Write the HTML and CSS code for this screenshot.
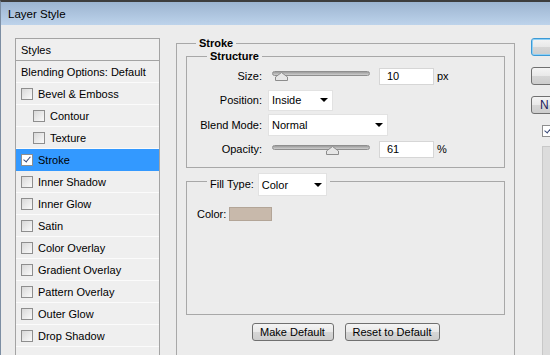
FILE: index.html
```html
<!DOCTYPE html>
<html>
<head>
    <title>Layer Style</title>
    <link rel="stylesheet" href="styles.css">
</head>
<body>
    <div class="window">
        <div class="titlebar">Layer Style</div>
        <div class="content">
            <div class="styles-list">
                <div class="item header">Styles</div>
                <div class="item">Blending Options: Default</div>
                <div class="item"><span class="check"></span>Bevel &amp; Emboss</div>
                <div class="item sub"><span class="check"></span>Contour</div>
                <div class="item sub"><span class="check"></span>Texture</div>
                <div class="item selected"><span class="check checked"></span>Stroke</div>
                <div class="item"><span class="check"></span>Inner Shadow</div>
                <div class="item"><span class="check"></span>Inner Glow</div>
                <div class="item"><span class="check"></span>Satin</div>
                <div class="item"><span class="check"></span>Color Overlay</div>
                <div class="item"><span class="check"></span>Gradient Overlay</div>
                <div class="item"><span class="check"></span>Pattern Overlay</div>
                <div class="item"><span class="check"></span>Outer Glow</div>
                <div class="item"><span class="check"></span>Drop Shadow</div>
                <div class="item"></div>
            </div>

            <fieldset class="group stroke">
                <legend class="title">Stroke</legend>

                <fieldset class="group structure">
                    <legend class="title inner">Structure</legend>
                    <div class="row size-row">
                        <label>Size:</label>
                        <div class="slider">
                            <div class="track"></div>
                            <svg class="thumb" style="left: 7px" width="13" height="9" viewBox="0 0 13 9">
                                <path d="M6.5 0.5 L12.5 5 L12.5 8.5 L0.5 8.5 L0.5 5 Z" fill="#e6e6e6" stroke="#8c8c8c"/>
                            </svg>
                        </div>
                        <div class="field">10</div>
                        <span class="unit">px</span>
                    </div>
                    <div class="row">
                        <label>Position:</label>
                        <div class="select pos-select">Inside<span class="arrow"></span></div>
                    </div>
                    <div class="row blend-row">
                        <label>Blend Mode:</label>
                        <div class="select blend-select">Normal<span class="arrow"></span></div>
                    </div>
                    <div class="row opacity-row">
                        <label>Opacity:</label>
                        <div class="slider">
                            <div class="track"></div>
                            <svg class="thumb" style="left: 58px" width="13" height="9" viewBox="0 0 13 9">
                                <path d="M6.5 0.5 L12.5 5 L12.5 8.5 L0.5 8.5 L0.5 5 Z" fill="#e6e6e6" stroke="#8c8c8c"/>
                            </svg>
                        </div>
                        <div class="field">61</div>
                        <span class="unit">%</span>
                    </div>
                </fieldset>

                <fieldset class="group fill">
                    <legend class="fill-legend">
                        <span class="fill-label">Fill Type:</span>
                        <span class="select fill-select">Color<span class="arrow"></span></span>
                    </legend>
                    <div class="color-row">
                        <span class="color-label">Color:</span>
                        <span class="swatch"></span>
                    </div>
                </fieldset>

                <div class="actions">
                    <button class="btn make-btn">Make Default</button>
                    <button class="btn reset-btn">Reset to Default</button>
                </div>
            </fieldset>

            <div class="side">
                <button class="btn side-btn focused"></button>
                <button class="btn side-btn"></button>
                <button class="btn side-btn new-btn">N</button>
                <div class="preview-row"><span class="check checked small"></span></div>
                <div class="preview"></div>
            </div>
        </div>
    </div>
</body>
</html>
```

FILE: styles.css
```css
body {
    margin: 0;
    width: 550px;
    height: 355px;
    overflow: hidden;
    background-color: #ececec;
    font-family: "Liberation Sans", Arial, sans-serif;
    font-size: 11px;
    color: #000;
}
.window {
    height: 355px;
    box-sizing: border-box;
    border-top: 2px solid #3d3d3d;
    border-left: 1px solid #7c8ea3;
    overflow: hidden;
}
.titlebar {
    height: 23px;
    line-height: 24px;
    padding-left: 7px;
    font-size: 11.5px;
    background: linear-gradient(#9cb4d0, #bdd3eb);
}
.content {
    display: flex;
    align-items: flex-start;
    padding-left: 14px;
}

/* styles list */
.styles-list {
    margin-top: 13px;
    width: 143px;
    height: 330px;
    flex-shrink: 0;
    border: 1px solid #a3a3a3;
    background-color: #efefef;
}
.item {
    height: 21px;
    display: flex;
    align-items: center;
    padding-left: 5px;
    border-bottom: 1px solid #fbfbfb;
    white-space: nowrap;
}
.item.header {
    border-bottom-color: #a3a3a3;
}
.item.sub {
    padding-left: 17px;
}
.item.selected {
    background-color: #3399ff;
    border-bottom-color: #3399ff;
}
.check {
    width: 10px;
    height: 10px;
    margin-right: 5px;
    border: 1px solid #8e8e8e;
    background: linear-gradient(135deg, #d8d8d8, #fafafa);
    flex-shrink: 0;
    position: relative;
}
.check.checked {
    background: #fff;
}
.check.checked::after {
    content: "";
    position: absolute;
    left: 3px;
    top: 0px;
    width: 3px;
    height: 6px;
    border: solid #3a4a78;
    border-width: 0 1.5px 1.5px 0;
    transform: rotate(40deg);
}

/* group boxes */
.group {
    margin: 0;
    border: 1px solid #a8a8a8;
    min-inline-size: 0;
}
.title {
    font-weight: bold;
    line-height: 13px;
    padding: 0 3px;
}
.stroke {
    margin-top: 12px;
    margin-left: 16px;
    width: 339px;
    height: 340px;
    box-sizing: border-box;
    padding: 0 9px;
    flex-shrink: 0;
}
.stroke > .title {
    margin-left: 10px;
}
.structure {
    padding: 1px 0 7px 0;
}
.title.inner {
    margin-left: 20px;
}
.row {
    display: flex;
    align-items: center;
    height: 24px;
}
.blend-row {
    height: 26px;
}
.opacity-row {
    height: 22px;
}
.row label {
    width: 75px;
    margin-right: 6px;
    text-align: right;
}
.slider {
    position: relative;
    width: 106px;
    height: 100%;
    margin-right: 5px;
    padding-top: 7px;
    box-sizing: border-box;
}
.track {
    margin: 0 4px;
    height: 3px;
    border: 1px solid #8f8f8f;
    border-radius: 3px;
    background: linear-gradient(#9c9c9c, #cfcfcf);
}
.thumb {
    position: absolute;
    top: 8px;
}
.field {
    width: 46px;
    height: 15px;
    line-height: 15px;
    padding-left: 7px;
    background: #fff;
    border: 1px solid #d6d6d6;
}
.unit {
    margin-left: 3px;
}
.select {
    display: flex;
    align-items: center;
    justify-content: space-between;
    box-sizing: border-box;
    height: 21px;
    padding: 0 4px 0 3px;
    background: #fff;
    border: 1px solid #e2e2e2;
}
.pos-select {
    width: 65px;
}
.blend-select {
    width: 120px;
    height: 22px;
}
.arrow {
    width: 0;
    height: 0;
    border-left: 4px solid transparent;
    border-right: 4px solid transparent;
    border-top: 4px solid #000;
}

/* fill type */
.fill {
    margin-top: 5px;
    padding: 0 0 93px 10px;
}
.fill-legend {
    display: flex;
    align-items: flex-start;
    height: 16px;
    margin-left: 10px;
    padding: 0 3px;
}
.fill-label {
    line-height: 23px;
    margin-right: 4px;
}
.fill-select {
    width: 69px;
    height: 23px;
}
.color-row {
    display: flex;
    align-items: center;
    margin-top: 18px;
    height: 14px;
}
.color-label {
    width: 32px;
}
.swatch {
    width: 41px;
    height: 12px;
    background-color: #c8b9ab;
    border: 1px solid #b3a597;
}

/* buttons */
.btn {
    height: 18px;
    padding: 0;
    font-family: "Liberation Sans", Arial, sans-serif;
    font-size: 11px;
    color: #000;
    border: 1px solid #707070;
    border-radius: 3px;
    background: linear-gradient(#f4f4f4 0%, #e8e8e8 50%, #d6d6d6 51%, #cdcdcd 100%);
}
.actions {
    display: flex;
    justify-content: center;
    gap: 11px;
    margin-top: 8px;
}
.make-btn {
    width: 82px;
}
.reset-btn {
    width: 95px;
}
.side {
    margin-top: 13px;
    margin-left: 16px;
    width: 80px;
    flex-shrink: 0;
    display: flex;
    flex-direction: column;
}
.side-btn {
    width: 80px;
    height: 18px;
    text-align: left;
    padding-left: 8px;
}
.side-btn + .side-btn {
    margin-top: 11px;
}
.new-btn {
    margin-top: 10px;
    font-size: 12px;
    color: #1a1a5a;
}
.focused {
    border-color: #3c9ad6;
    box-shadow: inset 0 0 0 1px #8fd0f5;
}
.preview-row {
    display: flex;
    align-items: center;
    margin-top: 11px;
    padding-left: 11px;
    height: 12px;
}
.preview {
    margin-top: 9px;
    margin-left: 11px;
    height: 230px;
    border: 1px solid #c8c8c8;
    background-color: #dcdcdc;
}
```
